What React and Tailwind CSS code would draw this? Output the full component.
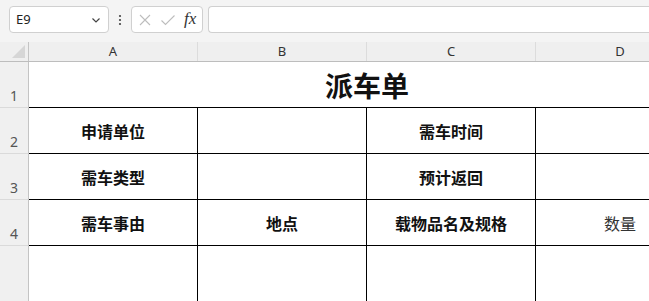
import React from "react";

const cjk = { fontFamily: '"Noto Sans CJK SC", "Noto Sans", sans-serif' };
const ui = { fontFamily: '"Segoe UI", "Noto Sans", "Liberation Sans", sans-serif' };

function RowHead({ n, h = "h-[46px]" }) {
  return (
    <div className={`${h} w-[29px] shrink-0 border-r border-b border-r-[#c4c4c4] border-b-[#dadada] bg-[#f0f0f0] flex items-end justify-center pb-[1px] text-[14px] text-[#555]`} style={ui}>
      {n}
    </div>
  );
}

function Cell({ children, bold = true, className = "", h = "h-[46px]" }) {
  return (
    <div
      className={`${h} w-[169px] shrink-0 border-r border-b border-black flex items-center justify-center text-[16px] ${bold ? "font-bold text-[#111]" : "text-[#333]"} ${className}`}
      style={cjk}
    >
      {children}
    </div>
  );
}

export default function App() {
  return (
    <div className="w-[649px] h-[301px] overflow-hidden bg-white">
      {/* top bar */}
      <div className="h-[42px] bg-[#f4f4f4] flex items-start pt-[6px] pl-[9px]">
        <div className="w-[100px] shrink-0 h-[27px] bg-white border border-[#d0d0d0] rounded-[4px] flex items-center justify-between pl-[6px] pr-[6px] text-[13px] text-[#222]" style={ui}>
          <span>E9</span>
          <svg width="12" height="12" viewBox="0 0 12 12" fill="none" stroke="#444" strokeWidth="1.2">
            <path d="M2.5 4.5 L6 8 L9.5 4.5" />
          </svg>
        </div>
        <div className="w-[22px] shrink-0 h-[27px] flex items-center justify-center">
          <svg width="4" height="12" viewBox="0 0 4 12" fill="#444">
            <circle cx="2" cy="2" r="1.1" />
            <circle cx="2" cy="6" r="1.1" />
            <circle cx="2" cy="10" r="1.1" />
          </svg>
        </div>
        <div className="w-[72px] shrink-0 h-[27px] bg-white border border-[#d0d0d0] rounded-[4px] flex items-center pl-[6px] gap-[8px]">
          <svg width="14" height="14" viewBox="0 0 14 14" fill="none" stroke="#bdbdbd" strokeWidth="1.1">
            <path d="M2 2 L12 12 M12 2 L2 12" />
          </svg>
          <svg width="16" height="14" viewBox="0 0 16 14" fill="none" stroke="#bdbdbd" strokeWidth="1.1">
            <path d="M1.5 7.5 L5.5 11.5 L14.5 2.5" />
          </svg>
          <span className="italic text-[17px] text-[#333] leading-none -mt-[2px]" style={{ fontFamily: '"Liberation Serif", "DejaVu Serif", serif' }}>
            fx
          </span>
        </div>
        <div className="ml-[5px] flex-1 h-[27px] bg-white border border-[#d0d0d0] border-r-0 rounded-l-[4px]" />
      </div>

      {/* column header */}
      <div className="flex h-[20px] bg-[#efefef] border-b border-[#bdbdbd] text-[13px] text-[#333]" style={ui}>
        <div className="w-[29px] shrink-0 h-full border-r border-[#c4c4c4] relative">
          <div className="absolute right-[3px] bottom-[3px] w-0 h-0 border-l-[13px] border-l-transparent border-b-[13px] border-b-[#d6d6d6]" />
        </div>
        {["A", "B", "C", "D"].map((c) => (
          <div key={c} className="w-[169px] shrink-0 h-full border-r border-[#dcdcdc] flex items-center justify-center">
            {c}
          </div>
        ))}
      </div>

      {/* body */}
      <div className="flex">
        <div className="flex flex-col shrink-0">
          <RowHead n="1" />
          <RowHead n="2" />
          <RowHead n="3" />
          <RowHead n="4" />
          <div className="h-[80px] w-[29px] border-r border-[#c4c4c4] bg-[#f0f0f0]" />
        </div>
        <div className="flex flex-col shrink-0">
          <div className="h-[46px] w-[676px] border-b border-black flex items-center justify-center text-[28px] font-bold text-[#111]" style={cjk}>
            派车单
          </div>
          <div className="flex">
            <Cell>申请单位</Cell>
            <Cell />
            <Cell>需车时间</Cell>
            <Cell />
          </div>
          <div className="flex">
            <Cell>需车类型</Cell>
            <Cell />
            <Cell>预计返回</Cell>
            <Cell />
          </div>
          <div className="flex">
            <Cell>需车事由</Cell>
            <Cell>地点</Cell>
            <Cell>载物品名及规格</Cell>
            <Cell bold={false}>数量</Cell>
          </div>
          <div className="flex">
            <Cell h="h-[80px]" />
            <Cell h="h-[80px]" />
            <Cell h="h-[80px]" />
            <Cell h="h-[80px]" />
          </div>
        </div>
      </div>
    </div>
  );
}
